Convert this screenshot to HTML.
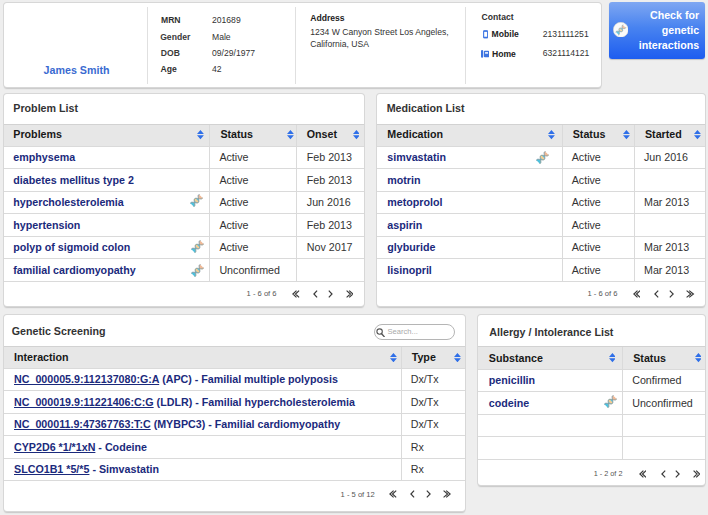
<!DOCTYPE html>
<html lang="en">
<head>
<meta charset="utf-8">
<title>Patient Summary</title>
<style>
*{box-sizing:border-box;margin:0;padding:0}
html,body{width:708px;height:515px;overflow:hidden}
body{background:#eeeeee;font-family:"Liberation Sans",sans-serif;font-size:10.7px;color:#333;position:relative}
.panel{position:absolute;background:#fff;border-radius:3px;box-shadow:0 0 0 1px #d7d7d7,0 1.9px 1.3px rgba(0,0,0,.17)}
.ptitle{position:absolute;font-weight:bold;font-size:10.7px;line-height:12px;color:#333;white-space:nowrap}
.t{position:absolute;white-space:nowrap;line-height:10px;font-size:8.6px;color:#333}
.b{font-weight:bold;color:#222}
table{position:absolute;border-collapse:collapse;table-layout:fixed}
th,td{height:22.55px;padding:0 0 0 10px;text-align:left;vertical-align:middle;font-size:10.7px;line-height:12px;white-space:nowrap;overflow:hidden;border-bottom:1px solid #dadada;border-left:1px solid #dadada;color:#333}
th:first-child,td:first-child{border-left:none;padding-left:9.3px}
th{background:#e7e7e7;font-weight:bold;color:#181818;border-top:1px solid #d2d2d2;padding-bottom:1.6px}
td{padding-left:9px;padding-bottom:.8px}
.p3 td:nth-child(3){padding-left:10px}
td.n{font-weight:bold;color:#1b2a7c}
.g td.n,.g th:first-child{padding-left:10px}
.g th{padding-bottom:0}
.g td{padding-bottom:.5px;height:22.5px}
.m td:first-child,.m th:first-child{padding-left:9.9px}
.a td:first-child,.a th:first-child{padding-left:10.5px}
.a th{padding-bottom:.4px}
.pager{position:absolute;color:#555;white-space:nowrap;line-height:10px}
</style>
</head>
<body>
<div class="panel" style="left:4px;top:3px;width:597.3px;height:84.2px"></div>
<div style="position:absolute;left:146.8px;top:6.5px;width:1px;height:77px;background:#e0e0e0"></div><div style="position:absolute;left:295.2px;top:6.5px;width:1px;height:77px;background:#e0e0e0"></div><div style="position:absolute;left:465.2px;top:6.5px;width:1px;height:77px;background:#e0e0e0"></div><div class="ptitle" style="left:43.6px;top:63.9px;color:#3a6bd1">James Smith</div>
<div class="t b" style="left:161px;top:14.90px;color:#303030">MRN</div><div class="t" style="left:212px;top:14.90px">201689</div><div class="t b" style="left:160.2px;top:31.90px;color:#3a3a3a">Gender</div><div class="t" style="left:212px;top:31.90px">Male</div><div class="t b" style="left:160.8px;top:47.70px;color:#3a3a3a">DOB</div><div class="t" style="left:212px;top:47.70px">09/29/1977</div><div class="t b" style="left:160.6px;top:64.10px;color:#303030">Age</div><div class="t" style="left:212px;top:64.10px">42</div>
<div class="t b" style="left:310.2px;top:12.7px">Address</div><div class="t" style="left:310.2px;top:26.8px">1234 W Canyon Street Los Angeles,</div><div class="t" style="left:310.2px;top:38.6px">California, USA</div>
<div class="t b" style="left:481.6px;top:12px;color:#303030">Contact</div><div class="t b" style="left:491.6px;top:28.6px">Mobile</div><div class="t b" style="left:492px;top:49px">Home</div><div class="t" style="left:542.8px;top:29.2px">2131111251</div><div class="t" style="left:542.8px;top:48.3px">6321114121</div><svg style="position:absolute;left:482.8px;top:30.4px" width="5.2" height="8.6" viewBox="0 0 5.2 8.6"><rect x=".6" y=".9" width="4" height="6.8" rx=".8" fill="none" stroke="#4a7fe6" stroke-width="1.2"/><path d="M.6 1.1H4.6M.6 7.5H4.6" stroke="#3d74e0" stroke-width="1.3"/></svg><svg style="position:absolute;left:481.3px;top:50.2px" width="8.2" height="7.8" viewBox="0 0 8.2 7.8"><rect x="0" y="0" width="2.2" height="7.8" rx="1.1" fill="#3d74e0"/><rect x="2.9" y=".7" width="5.3" height="6.6" rx="1" fill="#3d74e0"/><rect x="4.1" y="2" width="2.9" height="1.8" fill="#dfe9fb"/></svg>
<div style="position:absolute;left:609.2px;top:2px;width:96px;height:56.8px;border-radius:3px;background:linear-gradient(#7fa7f2,#4883f0 45%,#1d5df0);box-shadow:0 1px 1px rgba(0,0,0,.18)"><div style="position:absolute;right:6.1px;top:5.6px;text-align:right;color:#fff;font-weight:bold;font-size:10.65px;line-height:15px;white-space:nowrap">Check for<br>genetic<br>interactions</div><svg style="position:absolute;left:3.6px;top:19.7px" width="15.6" height="15.6" viewBox="-1.3 -1.3 15.6 15.6"><circle cx="6.5" cy="6.5" r="7.5" fill="#fbfbfa" stroke="#ddd6c8" stroke-width=".5"/><g transform="translate(6.5 6.5) scale(.8) translate(-6.5 -6.5)" opacity=".85"><path d="M0.38 9.25 L0.41 9.16 L0.45 9.08 L0.49 9.00 L0.54 8.92 L0.59 8.85 L0.64 8.79 L0.70 8.72 L0.76 8.67 L0.83 8.61 L0.90 8.56 L0.97 8.52 L1.05 8.48 L1.13 8.44 L1.22 8.40 L1.31 8.37 L1.40 8.35 L1.50 8.33 L1.60 8.31 L1.71 8.29 L1.82 8.28 L1.93 8.27 L2.05 8.27 L2.17 8.27 L2.29 8.27 L2.41 8.28 L2.54 8.28 L2.67 8.29 L2.80 8.31 L2.94 8.32 L3.08 8.34 L3.21 8.36 L3.35 8.38 L3.50 8.40 L3.64 8.42 L3.79 8.45 L3.93 8.47 L4.08 8.50 L4.22 8.53 L4.37 8.55 L4.52 8.58 L4.52 8.58 L4.55 8.73 L4.57 8.88 L4.60 9.02 L4.63 9.17 L4.65 9.31 L4.68 9.46 L4.70 9.60 L4.72 9.75 L4.74 9.89 L4.76 10.02 L4.78 10.16 L4.79 10.30 L4.81 10.43 L4.82 10.56 L4.82 10.69 L4.83 10.81 L4.83 10.93 L4.83 11.05 L4.83 11.17 L4.82 11.28 L4.81 11.39 L4.79 11.50 L4.77 11.60 L4.75 11.70 L4.73 11.79 L4.70 11.88 L4.66 11.97 L4.62 12.05 L4.58 12.13 L4.54 12.20 L4.49 12.27 L4.43 12.34 L4.38 12.40 L4.31 12.46 L4.25 12.51 L4.18 12.56 L4.10 12.61 L4.02 12.65 L3.94 12.69 L3.85 12.72Z" fill="#4fc0dc"/><path d="M4.52 8.58 L4.76 8.63 L5.01 8.67 L5.25 8.71 L5.48 8.75 L5.72 8.79 L5.95 8.82 L6.17 8.85 L6.39 8.87 L6.61 8.88 L6.81 8.89 L7.01 8.89 L7.20 8.88 L7.37 8.86 L7.54 8.83 L7.70 8.79 L7.85 8.74 L7.99 8.68 L8.12 8.61 L8.23 8.53 L8.34 8.44 L8.43 8.33 L8.51 8.22 L8.58 8.09 L8.64 7.95 L8.69 7.80 L8.73 7.64 L8.76 7.47 L8.78 7.30 L8.79 7.11 L8.79 6.91 L8.78 6.71 L8.77 6.49 L8.75 6.27 L8.72 6.05 L8.69 5.82 L8.65 5.58 L8.61 5.35 L8.57 5.11 L8.53 4.86 L8.48 4.62 L8.48 4.62 L8.24 4.57 L7.99 4.53 L7.75 4.49 L7.52 4.45 L7.28 4.41 L7.05 4.38 L6.83 4.35 L6.61 4.33 L6.39 4.32 L6.19 4.31 L5.99 4.31 L5.80 4.32 L5.63 4.34 L5.46 4.37 L5.30 4.41 L5.15 4.46 L5.01 4.52 L4.88 4.59 L4.77 4.67 L4.66 4.76 L4.57 4.87 L4.49 4.98 L4.42 5.11 L4.36 5.25 L4.31 5.40 L4.27 5.56 L4.24 5.73 L4.22 5.90 L4.21 6.09 L4.21 6.29 L4.22 6.49 L4.23 6.71 L4.25 6.93 L4.28 7.15 L4.31 7.38 L4.35 7.62 L4.39 7.85 L4.43 8.09 L4.47 8.34 L4.52 8.58Z" fill="#55c4e0"/><path d="M6.95 8.89 L7.03 8.89 L7.10 8.89 L7.18 8.88 L7.25 8.87 L7.32 8.87 L7.39 8.86 L7.45 8.85 L7.52 8.84 L7.58 8.82 L7.65 8.81 L7.71 8.79 L7.77 8.77 L7.83 8.75 L7.88 8.73 L7.94 8.71 L7.99 8.68 L8.04 8.66 L8.09 8.63 L8.14 8.60 L8.19 8.57 L8.23 8.53 L8.27 8.50 L8.31 8.46 L8.35 8.42 L8.39 8.38 L8.43 8.34 L8.46 8.30 L8.49 8.25 L8.52 8.20 L8.55 8.16 L8.58 8.10 L8.60 8.05 L8.63 8.00 L8.65 7.94 L8.67 7.88 L8.69 7.83 L8.70 7.76 L8.72 7.70 L8.73 7.64 L8.75 7.57 L5.53 4.35 L5.46 4.37 L5.40 4.38 L5.34 4.40 L5.27 4.41 L5.22 4.43 L5.16 4.45 L5.10 4.47 L5.05 4.50 L5.00 4.52 L4.94 4.55 L4.90 4.58 L4.85 4.61 L4.80 4.64 L4.76 4.67 L4.72 4.71 L4.68 4.75 L4.64 4.79 L4.60 4.83 L4.57 4.87 L4.53 4.91 L4.50 4.96 L4.47 5.01 L4.44 5.06 L4.42 5.11 L4.39 5.16 L4.37 5.22 L4.35 5.27 L4.33 5.33 L4.31 5.39 L4.29 5.45 L4.28 5.52 L4.26 5.58 L4.25 5.65 L4.24 5.71 L4.23 5.78 L4.23 5.85 L4.22 5.92 L4.21 6.00 L4.21 6.07 L4.21 6.15Z" fill="#f6cd94"/><path d="M8.48 4.62 L8.45 4.47 L8.43 4.32 L8.40 4.18 L8.37 4.03 L8.35 3.89 L8.32 3.74 L8.30 3.60 L8.28 3.45 L8.26 3.31 L8.24 3.18 L8.22 3.04 L8.21 2.90 L8.19 2.77 L8.18 2.64 L8.18 2.51 L8.17 2.39 L8.17 2.27 L8.17 2.15 L8.17 2.03 L8.18 1.92 L8.19 1.81 L8.21 1.70 L8.23 1.60 L8.25 1.50 L8.27 1.41 L8.30 1.32 L8.34 1.23 L8.38 1.15 L8.42 1.07 L8.46 1.00 L8.51 0.93 L8.57 0.86 L8.62 0.80 L8.69 0.74 L8.75 0.69 L8.82 0.64 L8.90 0.59 L8.98 0.55 L9.06 0.51 L9.15 0.48 L12.62 3.95 L12.59 4.04 L12.55 4.12 L12.51 4.20 L12.46 4.28 L12.41 4.35 L12.36 4.41 L12.30 4.48 L12.24 4.53 L12.17 4.59 L12.10 4.64 L12.03 4.68 L11.95 4.72 L11.87 4.76 L11.78 4.80 L11.69 4.83 L11.60 4.85 L11.50 4.87 L11.40 4.89 L11.29 4.91 L11.18 4.92 L11.07 4.93 L10.95 4.93 L10.83 4.93 L10.71 4.93 L10.59 4.92 L10.46 4.92 L10.33 4.91 L10.20 4.89 L10.06 4.88 L9.92 4.86 L9.79 4.84 L9.65 4.82 L9.50 4.80 L9.36 4.78 L9.21 4.75 L9.07 4.73 L8.92 4.70 L8.78 4.67 L8.63 4.65 L8.48 4.62Z" fill="#efba98"/><path d="M0.38 9.25 L0.52 8.95 L0.72 8.71 L0.97 8.52 L1.27 8.39 L1.63 8.30 L2.03 8.27 L2.48 8.28 L2.96 8.32 L3.47 8.39 L4.00 8.48 L4.54 8.58 L5.07 8.68 L5.60 8.77 L6.11 8.84 L6.59 8.88 L7.03 8.89 L7.44 8.85 L7.79 8.77 L8.09 8.63 L8.34 8.44 L8.53 8.19 L8.67 7.89 L8.75 7.54 L8.79 7.13 L8.78 6.69 L8.74 6.21 L8.67 5.70 L8.58 5.17 L8.48 4.64 L8.38 4.10 L8.29 3.57 L8.22 3.06 L8.18 2.58 L8.17 2.13 L8.20 1.73 L8.29 1.37 L8.42 1.07 L8.61 0.82 L8.85 0.62 L9.15 0.48" fill="none" stroke="#7f97a0" stroke-width="1" stroke-linecap="round"/><path d="M3.85 12.72 L4.15 12.58 L4.39 12.38 L4.58 12.13 L4.71 11.83 L4.80 11.47 L4.83 11.07 L4.82 10.62 L4.78 10.14 L4.71 9.63 L4.62 9.10 L4.52 8.56 L4.42 8.03 L4.33 7.50 L4.26 6.99 L4.22 6.51 L4.21 6.07 L4.25 5.66 L4.33 5.31 L4.47 5.01 L4.66 4.76 L4.91 4.57 L5.21 4.43 L5.56 4.35 L5.97 4.31 L6.41 4.32 L6.89 4.36 L7.40 4.43 L7.93 4.52 L8.46 4.62 L9.00 4.72 L9.53 4.81 L10.04 4.88 L10.52 4.92 L10.97 4.93 L11.37 4.90 L11.73 4.81 L12.03 4.68 L12.28 4.49 L12.48 4.25 L12.62 3.95" fill="none" stroke="#8c9a96" stroke-width="1" stroke-linecap="round"/></g></svg></div>
<div class="panel" style="left:4px;top:94px;width:360.3px;height:211.8px"></div><div class="ptitle" style="left:13.3px;top:101.5px">Problem List</div><div class="p3"><table style="left:4px;top:123.5px;width:360.3px"><colgroup><col style="width:205.9px"><col style="width:86.4px"><col></colgroup><tr><th style="height:22.2px">Problems</th><th style="height:22.2px">Status</th><th style="height:22.2px">Onset</th></tr><tr><td class="n">emphysema</td><td>Active</td><td>Feb 2013</td></tr><tr><td class="n">diabetes mellitus type 2</td><td>Active</td><td>Feb 2013</td></tr><tr><td class="n">hypercholesterolemia</td><td>Active</td><td>Jun 2016</td></tr><tr><td class="n">hypertension</td><td>Active</td><td>Feb 2013</td></tr><tr><td class="n">polyp of sigmoid colon</td><td>Active</td><td>Nov 2017</td></tr><tr><td class="n">familial cardiomyopathy</td><td>Unconfirmed</td><td></td></tr></table></div><svg style="position:absolute;left:197.05px;top:130.20px" width="6.9" height="9.4" viewBox="0 0 6.5 8.7"><path d="M3.25 0L6.5 3.8H0Z M0 4.9H6.5L3.25 8.7Z" fill="#2f6fe8"/></svg><svg style="position:absolute;left:286.65px;top:130.20px" width="6.9" height="9.4" viewBox="0 0 6.5 8.7"><path d="M3.25 0L6.5 3.8H0Z M0 4.9H6.5L3.25 8.7Z" fill="#2f6fe8"/></svg><svg style="position:absolute;left:352.55px;top:130.20px" width="6.9" height="9.4" viewBox="0 0 6.5 8.7"><path d="M3.25 0L6.5 3.8H0Z M0 4.9H6.5L3.25 8.7Z" fill="#2f6fe8"/></svg><svg style="position:absolute;left:190.2px;top:194.4px" width="13" height="13" viewBox="0 0 13 13"><path d="M0.38 9.25 L0.41 9.16 L0.45 9.08 L0.49 9.00 L0.54 8.92 L0.59 8.85 L0.64 8.79 L0.70 8.72 L0.76 8.67 L0.83 8.61 L0.90 8.56 L0.97 8.52 L1.05 8.48 L1.13 8.44 L1.22 8.40 L1.31 8.37 L1.40 8.35 L1.50 8.33 L1.60 8.31 L1.71 8.29 L1.82 8.28 L1.93 8.27 L2.05 8.27 L2.17 8.27 L2.29 8.27 L2.41 8.28 L2.54 8.28 L2.67 8.29 L2.80 8.31 L2.94 8.32 L3.08 8.34 L3.21 8.36 L3.35 8.38 L3.50 8.40 L3.64 8.42 L3.79 8.45 L3.93 8.47 L4.08 8.50 L4.22 8.53 L4.37 8.55 L4.52 8.58 L4.52 8.58 L4.55 8.73 L4.57 8.88 L4.60 9.02 L4.63 9.17 L4.65 9.31 L4.68 9.46 L4.70 9.60 L4.72 9.75 L4.74 9.89 L4.76 10.02 L4.78 10.16 L4.79 10.30 L4.81 10.43 L4.82 10.56 L4.82 10.69 L4.83 10.81 L4.83 10.93 L4.83 11.05 L4.83 11.17 L4.82 11.28 L4.81 11.39 L4.79 11.50 L4.77 11.60 L4.75 11.70 L4.73 11.79 L4.70 11.88 L4.66 11.97 L4.62 12.05 L4.58 12.13 L4.54 12.20 L4.49 12.27 L4.43 12.34 L4.38 12.40 L4.31 12.46 L4.25 12.51 L4.18 12.56 L4.10 12.61 L4.02 12.65 L3.94 12.69 L3.85 12.72Z" fill="#4fc0dc"/><path d="M4.52 8.58 L4.76 8.63 L5.01 8.67 L5.25 8.71 L5.48 8.75 L5.72 8.79 L5.95 8.82 L6.17 8.85 L6.39 8.87 L6.61 8.88 L6.81 8.89 L7.01 8.89 L7.20 8.88 L7.37 8.86 L7.54 8.83 L7.70 8.79 L7.85 8.74 L7.99 8.68 L8.12 8.61 L8.23 8.53 L8.34 8.44 L8.43 8.33 L8.51 8.22 L8.58 8.09 L8.64 7.95 L8.69 7.80 L8.73 7.64 L8.76 7.47 L8.78 7.30 L8.79 7.11 L8.79 6.91 L8.78 6.71 L8.77 6.49 L8.75 6.27 L8.72 6.05 L8.69 5.82 L8.65 5.58 L8.61 5.35 L8.57 5.11 L8.53 4.86 L8.48 4.62 L8.48 4.62 L8.24 4.57 L7.99 4.53 L7.75 4.49 L7.52 4.45 L7.28 4.41 L7.05 4.38 L6.83 4.35 L6.61 4.33 L6.39 4.32 L6.19 4.31 L5.99 4.31 L5.80 4.32 L5.63 4.34 L5.46 4.37 L5.30 4.41 L5.15 4.46 L5.01 4.52 L4.88 4.59 L4.77 4.67 L4.66 4.76 L4.57 4.87 L4.49 4.98 L4.42 5.11 L4.36 5.25 L4.31 5.40 L4.27 5.56 L4.24 5.73 L4.22 5.90 L4.21 6.09 L4.21 6.29 L4.22 6.49 L4.23 6.71 L4.25 6.93 L4.28 7.15 L4.31 7.38 L4.35 7.62 L4.39 7.85 L4.43 8.09 L4.47 8.34 L4.52 8.58Z" fill="#55c4e0"/><path d="M6.95 8.89 L7.03 8.89 L7.10 8.89 L7.18 8.88 L7.25 8.87 L7.32 8.87 L7.39 8.86 L7.45 8.85 L7.52 8.84 L7.58 8.82 L7.65 8.81 L7.71 8.79 L7.77 8.77 L7.83 8.75 L7.88 8.73 L7.94 8.71 L7.99 8.68 L8.04 8.66 L8.09 8.63 L8.14 8.60 L8.19 8.57 L8.23 8.53 L8.27 8.50 L8.31 8.46 L8.35 8.42 L8.39 8.38 L8.43 8.34 L8.46 8.30 L8.49 8.25 L8.52 8.20 L8.55 8.16 L8.58 8.10 L8.60 8.05 L8.63 8.00 L8.65 7.94 L8.67 7.88 L8.69 7.83 L8.70 7.76 L8.72 7.70 L8.73 7.64 L8.75 7.57 L5.53 4.35 L5.46 4.37 L5.40 4.38 L5.34 4.40 L5.27 4.41 L5.22 4.43 L5.16 4.45 L5.10 4.47 L5.05 4.50 L5.00 4.52 L4.94 4.55 L4.90 4.58 L4.85 4.61 L4.80 4.64 L4.76 4.67 L4.72 4.71 L4.68 4.75 L4.64 4.79 L4.60 4.83 L4.57 4.87 L4.53 4.91 L4.50 4.96 L4.47 5.01 L4.44 5.06 L4.42 5.11 L4.39 5.16 L4.37 5.22 L4.35 5.27 L4.33 5.33 L4.31 5.39 L4.29 5.45 L4.28 5.52 L4.26 5.58 L4.25 5.65 L4.24 5.71 L4.23 5.78 L4.23 5.85 L4.22 5.92 L4.21 6.00 L4.21 6.07 L4.21 6.15Z" fill="#f6cd94"/><path d="M8.48 4.62 L8.45 4.47 L8.43 4.32 L8.40 4.18 L8.37 4.03 L8.35 3.89 L8.32 3.74 L8.30 3.60 L8.28 3.45 L8.26 3.31 L8.24 3.18 L8.22 3.04 L8.21 2.90 L8.19 2.77 L8.18 2.64 L8.18 2.51 L8.17 2.39 L8.17 2.27 L8.17 2.15 L8.17 2.03 L8.18 1.92 L8.19 1.81 L8.21 1.70 L8.23 1.60 L8.25 1.50 L8.27 1.41 L8.30 1.32 L8.34 1.23 L8.38 1.15 L8.42 1.07 L8.46 1.00 L8.51 0.93 L8.57 0.86 L8.62 0.80 L8.69 0.74 L8.75 0.69 L8.82 0.64 L8.90 0.59 L8.98 0.55 L9.06 0.51 L9.15 0.48 L12.62 3.95 L12.59 4.04 L12.55 4.12 L12.51 4.20 L12.46 4.28 L12.41 4.35 L12.36 4.41 L12.30 4.48 L12.24 4.53 L12.17 4.59 L12.10 4.64 L12.03 4.68 L11.95 4.72 L11.87 4.76 L11.78 4.80 L11.69 4.83 L11.60 4.85 L11.50 4.87 L11.40 4.89 L11.29 4.91 L11.18 4.92 L11.07 4.93 L10.95 4.93 L10.83 4.93 L10.71 4.93 L10.59 4.92 L10.46 4.92 L10.33 4.91 L10.20 4.89 L10.06 4.88 L9.92 4.86 L9.79 4.84 L9.65 4.82 L9.50 4.80 L9.36 4.78 L9.21 4.75 L9.07 4.73 L8.92 4.70 L8.78 4.67 L8.63 4.65 L8.48 4.62Z" fill="#efba98"/><path d="M0.38 9.25 L0.52 8.95 L0.72 8.71 L0.97 8.52 L1.27 8.39 L1.63 8.30 L2.03 8.27 L2.48 8.28 L2.96 8.32 L3.47 8.39 L4.00 8.48 L4.54 8.58 L5.07 8.68 L5.60 8.77 L6.11 8.84 L6.59 8.88 L7.03 8.89 L7.44 8.85 L7.79 8.77 L8.09 8.63 L8.34 8.44 L8.53 8.19 L8.67 7.89 L8.75 7.54 L8.79 7.13 L8.78 6.69 L8.74 6.21 L8.67 5.70 L8.58 5.17 L8.48 4.64 L8.38 4.10 L8.29 3.57 L8.22 3.06 L8.18 2.58 L8.17 2.13 L8.20 1.73 L8.29 1.37 L8.42 1.07 L8.61 0.82 L8.85 0.62 L9.15 0.48" fill="none" stroke="#7f97a0" stroke-width="1" stroke-linecap="round"/><path d="M3.85 12.72 L4.15 12.58 L4.39 12.38 L4.58 12.13 L4.71 11.83 L4.80 11.47 L4.83 11.07 L4.82 10.62 L4.78 10.14 L4.71 9.63 L4.62 9.10 L4.52 8.56 L4.42 8.03 L4.33 7.50 L4.26 6.99 L4.22 6.51 L4.21 6.07 L4.25 5.66 L4.33 5.31 L4.47 5.01 L4.66 4.76 L4.91 4.57 L5.21 4.43 L5.56 4.35 L5.97 4.31 L6.41 4.32 L6.89 4.36 L7.40 4.43 L7.93 4.52 L8.46 4.62 L9.00 4.72 L9.53 4.81 L10.04 4.88 L10.52 4.92 L10.97 4.93 L11.37 4.90 L11.73 4.81 L12.03 4.68 L12.28 4.49 L12.48 4.25 L12.62 3.95" fill="none" stroke="#8c9a96" stroke-width="1" stroke-linecap="round"/></svg><svg style="position:absolute;left:191.1px;top:240.3px" width="13" height="13" viewBox="0 0 13 13"><path d="M0.38 9.25 L0.41 9.16 L0.45 9.08 L0.49 9.00 L0.54 8.92 L0.59 8.85 L0.64 8.79 L0.70 8.72 L0.76 8.67 L0.83 8.61 L0.90 8.56 L0.97 8.52 L1.05 8.48 L1.13 8.44 L1.22 8.40 L1.31 8.37 L1.40 8.35 L1.50 8.33 L1.60 8.31 L1.71 8.29 L1.82 8.28 L1.93 8.27 L2.05 8.27 L2.17 8.27 L2.29 8.27 L2.41 8.28 L2.54 8.28 L2.67 8.29 L2.80 8.31 L2.94 8.32 L3.08 8.34 L3.21 8.36 L3.35 8.38 L3.50 8.40 L3.64 8.42 L3.79 8.45 L3.93 8.47 L4.08 8.50 L4.22 8.53 L4.37 8.55 L4.52 8.58 L4.52 8.58 L4.55 8.73 L4.57 8.88 L4.60 9.02 L4.63 9.17 L4.65 9.31 L4.68 9.46 L4.70 9.60 L4.72 9.75 L4.74 9.89 L4.76 10.02 L4.78 10.16 L4.79 10.30 L4.81 10.43 L4.82 10.56 L4.82 10.69 L4.83 10.81 L4.83 10.93 L4.83 11.05 L4.83 11.17 L4.82 11.28 L4.81 11.39 L4.79 11.50 L4.77 11.60 L4.75 11.70 L4.73 11.79 L4.70 11.88 L4.66 11.97 L4.62 12.05 L4.58 12.13 L4.54 12.20 L4.49 12.27 L4.43 12.34 L4.38 12.40 L4.31 12.46 L4.25 12.51 L4.18 12.56 L4.10 12.61 L4.02 12.65 L3.94 12.69 L3.85 12.72Z" fill="#4fc0dc"/><path d="M4.52 8.58 L4.76 8.63 L5.01 8.67 L5.25 8.71 L5.48 8.75 L5.72 8.79 L5.95 8.82 L6.17 8.85 L6.39 8.87 L6.61 8.88 L6.81 8.89 L7.01 8.89 L7.20 8.88 L7.37 8.86 L7.54 8.83 L7.70 8.79 L7.85 8.74 L7.99 8.68 L8.12 8.61 L8.23 8.53 L8.34 8.44 L8.43 8.33 L8.51 8.22 L8.58 8.09 L8.64 7.95 L8.69 7.80 L8.73 7.64 L8.76 7.47 L8.78 7.30 L8.79 7.11 L8.79 6.91 L8.78 6.71 L8.77 6.49 L8.75 6.27 L8.72 6.05 L8.69 5.82 L8.65 5.58 L8.61 5.35 L8.57 5.11 L8.53 4.86 L8.48 4.62 L8.48 4.62 L8.24 4.57 L7.99 4.53 L7.75 4.49 L7.52 4.45 L7.28 4.41 L7.05 4.38 L6.83 4.35 L6.61 4.33 L6.39 4.32 L6.19 4.31 L5.99 4.31 L5.80 4.32 L5.63 4.34 L5.46 4.37 L5.30 4.41 L5.15 4.46 L5.01 4.52 L4.88 4.59 L4.77 4.67 L4.66 4.76 L4.57 4.87 L4.49 4.98 L4.42 5.11 L4.36 5.25 L4.31 5.40 L4.27 5.56 L4.24 5.73 L4.22 5.90 L4.21 6.09 L4.21 6.29 L4.22 6.49 L4.23 6.71 L4.25 6.93 L4.28 7.15 L4.31 7.38 L4.35 7.62 L4.39 7.85 L4.43 8.09 L4.47 8.34 L4.52 8.58Z" fill="#55c4e0"/><path d="M6.95 8.89 L7.03 8.89 L7.10 8.89 L7.18 8.88 L7.25 8.87 L7.32 8.87 L7.39 8.86 L7.45 8.85 L7.52 8.84 L7.58 8.82 L7.65 8.81 L7.71 8.79 L7.77 8.77 L7.83 8.75 L7.88 8.73 L7.94 8.71 L7.99 8.68 L8.04 8.66 L8.09 8.63 L8.14 8.60 L8.19 8.57 L8.23 8.53 L8.27 8.50 L8.31 8.46 L8.35 8.42 L8.39 8.38 L8.43 8.34 L8.46 8.30 L8.49 8.25 L8.52 8.20 L8.55 8.16 L8.58 8.10 L8.60 8.05 L8.63 8.00 L8.65 7.94 L8.67 7.88 L8.69 7.83 L8.70 7.76 L8.72 7.70 L8.73 7.64 L8.75 7.57 L5.53 4.35 L5.46 4.37 L5.40 4.38 L5.34 4.40 L5.27 4.41 L5.22 4.43 L5.16 4.45 L5.10 4.47 L5.05 4.50 L5.00 4.52 L4.94 4.55 L4.90 4.58 L4.85 4.61 L4.80 4.64 L4.76 4.67 L4.72 4.71 L4.68 4.75 L4.64 4.79 L4.60 4.83 L4.57 4.87 L4.53 4.91 L4.50 4.96 L4.47 5.01 L4.44 5.06 L4.42 5.11 L4.39 5.16 L4.37 5.22 L4.35 5.27 L4.33 5.33 L4.31 5.39 L4.29 5.45 L4.28 5.52 L4.26 5.58 L4.25 5.65 L4.24 5.71 L4.23 5.78 L4.23 5.85 L4.22 5.92 L4.21 6.00 L4.21 6.07 L4.21 6.15Z" fill="#f6cd94"/><path d="M8.48 4.62 L8.45 4.47 L8.43 4.32 L8.40 4.18 L8.37 4.03 L8.35 3.89 L8.32 3.74 L8.30 3.60 L8.28 3.45 L8.26 3.31 L8.24 3.18 L8.22 3.04 L8.21 2.90 L8.19 2.77 L8.18 2.64 L8.18 2.51 L8.17 2.39 L8.17 2.27 L8.17 2.15 L8.17 2.03 L8.18 1.92 L8.19 1.81 L8.21 1.70 L8.23 1.60 L8.25 1.50 L8.27 1.41 L8.30 1.32 L8.34 1.23 L8.38 1.15 L8.42 1.07 L8.46 1.00 L8.51 0.93 L8.57 0.86 L8.62 0.80 L8.69 0.74 L8.75 0.69 L8.82 0.64 L8.90 0.59 L8.98 0.55 L9.06 0.51 L9.15 0.48 L12.62 3.95 L12.59 4.04 L12.55 4.12 L12.51 4.20 L12.46 4.28 L12.41 4.35 L12.36 4.41 L12.30 4.48 L12.24 4.53 L12.17 4.59 L12.10 4.64 L12.03 4.68 L11.95 4.72 L11.87 4.76 L11.78 4.80 L11.69 4.83 L11.60 4.85 L11.50 4.87 L11.40 4.89 L11.29 4.91 L11.18 4.92 L11.07 4.93 L10.95 4.93 L10.83 4.93 L10.71 4.93 L10.59 4.92 L10.46 4.92 L10.33 4.91 L10.20 4.89 L10.06 4.88 L9.92 4.86 L9.79 4.84 L9.65 4.82 L9.50 4.80 L9.36 4.78 L9.21 4.75 L9.07 4.73 L8.92 4.70 L8.78 4.67 L8.63 4.65 L8.48 4.62Z" fill="#efba98"/><path d="M0.38 9.25 L0.52 8.95 L0.72 8.71 L0.97 8.52 L1.27 8.39 L1.63 8.30 L2.03 8.27 L2.48 8.28 L2.96 8.32 L3.47 8.39 L4.00 8.48 L4.54 8.58 L5.07 8.68 L5.60 8.77 L6.11 8.84 L6.59 8.88 L7.03 8.89 L7.44 8.85 L7.79 8.77 L8.09 8.63 L8.34 8.44 L8.53 8.19 L8.67 7.89 L8.75 7.54 L8.79 7.13 L8.78 6.69 L8.74 6.21 L8.67 5.70 L8.58 5.17 L8.48 4.64 L8.38 4.10 L8.29 3.57 L8.22 3.06 L8.18 2.58 L8.17 2.13 L8.20 1.73 L8.29 1.37 L8.42 1.07 L8.61 0.82 L8.85 0.62 L9.15 0.48" fill="none" stroke="#7f97a0" stroke-width="1" stroke-linecap="round"/><path d="M3.85 12.72 L4.15 12.58 L4.39 12.38 L4.58 12.13 L4.71 11.83 L4.80 11.47 L4.83 11.07 L4.82 10.62 L4.78 10.14 L4.71 9.63 L4.62 9.10 L4.52 8.56 L4.42 8.03 L4.33 7.50 L4.26 6.99 L4.22 6.51 L4.21 6.07 L4.25 5.66 L4.33 5.31 L4.47 5.01 L4.66 4.76 L4.91 4.57 L5.21 4.43 L5.56 4.35 L5.97 4.31 L6.41 4.32 L6.89 4.36 L7.40 4.43 L7.93 4.52 L8.46 4.62 L9.00 4.72 L9.53 4.81 L10.04 4.88 L10.52 4.92 L10.97 4.93 L11.37 4.90 L11.73 4.81 L12.03 4.68 L12.28 4.49 L12.48 4.25 L12.62 3.95" fill="none" stroke="#8c9a96" stroke-width="1" stroke-linecap="round"/></svg><svg style="position:absolute;left:191.1px;top:264.1px" width="13" height="13" viewBox="0 0 13 13"><path d="M0.38 9.25 L0.41 9.16 L0.45 9.08 L0.49 9.00 L0.54 8.92 L0.59 8.85 L0.64 8.79 L0.70 8.72 L0.76 8.67 L0.83 8.61 L0.90 8.56 L0.97 8.52 L1.05 8.48 L1.13 8.44 L1.22 8.40 L1.31 8.37 L1.40 8.35 L1.50 8.33 L1.60 8.31 L1.71 8.29 L1.82 8.28 L1.93 8.27 L2.05 8.27 L2.17 8.27 L2.29 8.27 L2.41 8.28 L2.54 8.28 L2.67 8.29 L2.80 8.31 L2.94 8.32 L3.08 8.34 L3.21 8.36 L3.35 8.38 L3.50 8.40 L3.64 8.42 L3.79 8.45 L3.93 8.47 L4.08 8.50 L4.22 8.53 L4.37 8.55 L4.52 8.58 L4.52 8.58 L4.55 8.73 L4.57 8.88 L4.60 9.02 L4.63 9.17 L4.65 9.31 L4.68 9.46 L4.70 9.60 L4.72 9.75 L4.74 9.89 L4.76 10.02 L4.78 10.16 L4.79 10.30 L4.81 10.43 L4.82 10.56 L4.82 10.69 L4.83 10.81 L4.83 10.93 L4.83 11.05 L4.83 11.17 L4.82 11.28 L4.81 11.39 L4.79 11.50 L4.77 11.60 L4.75 11.70 L4.73 11.79 L4.70 11.88 L4.66 11.97 L4.62 12.05 L4.58 12.13 L4.54 12.20 L4.49 12.27 L4.43 12.34 L4.38 12.40 L4.31 12.46 L4.25 12.51 L4.18 12.56 L4.10 12.61 L4.02 12.65 L3.94 12.69 L3.85 12.72Z" fill="#4fc0dc"/><path d="M4.52 8.58 L4.76 8.63 L5.01 8.67 L5.25 8.71 L5.48 8.75 L5.72 8.79 L5.95 8.82 L6.17 8.85 L6.39 8.87 L6.61 8.88 L6.81 8.89 L7.01 8.89 L7.20 8.88 L7.37 8.86 L7.54 8.83 L7.70 8.79 L7.85 8.74 L7.99 8.68 L8.12 8.61 L8.23 8.53 L8.34 8.44 L8.43 8.33 L8.51 8.22 L8.58 8.09 L8.64 7.95 L8.69 7.80 L8.73 7.64 L8.76 7.47 L8.78 7.30 L8.79 7.11 L8.79 6.91 L8.78 6.71 L8.77 6.49 L8.75 6.27 L8.72 6.05 L8.69 5.82 L8.65 5.58 L8.61 5.35 L8.57 5.11 L8.53 4.86 L8.48 4.62 L8.48 4.62 L8.24 4.57 L7.99 4.53 L7.75 4.49 L7.52 4.45 L7.28 4.41 L7.05 4.38 L6.83 4.35 L6.61 4.33 L6.39 4.32 L6.19 4.31 L5.99 4.31 L5.80 4.32 L5.63 4.34 L5.46 4.37 L5.30 4.41 L5.15 4.46 L5.01 4.52 L4.88 4.59 L4.77 4.67 L4.66 4.76 L4.57 4.87 L4.49 4.98 L4.42 5.11 L4.36 5.25 L4.31 5.40 L4.27 5.56 L4.24 5.73 L4.22 5.90 L4.21 6.09 L4.21 6.29 L4.22 6.49 L4.23 6.71 L4.25 6.93 L4.28 7.15 L4.31 7.38 L4.35 7.62 L4.39 7.85 L4.43 8.09 L4.47 8.34 L4.52 8.58Z" fill="#55c4e0"/><path d="M6.95 8.89 L7.03 8.89 L7.10 8.89 L7.18 8.88 L7.25 8.87 L7.32 8.87 L7.39 8.86 L7.45 8.85 L7.52 8.84 L7.58 8.82 L7.65 8.81 L7.71 8.79 L7.77 8.77 L7.83 8.75 L7.88 8.73 L7.94 8.71 L7.99 8.68 L8.04 8.66 L8.09 8.63 L8.14 8.60 L8.19 8.57 L8.23 8.53 L8.27 8.50 L8.31 8.46 L8.35 8.42 L8.39 8.38 L8.43 8.34 L8.46 8.30 L8.49 8.25 L8.52 8.20 L8.55 8.16 L8.58 8.10 L8.60 8.05 L8.63 8.00 L8.65 7.94 L8.67 7.88 L8.69 7.83 L8.70 7.76 L8.72 7.70 L8.73 7.64 L8.75 7.57 L5.53 4.35 L5.46 4.37 L5.40 4.38 L5.34 4.40 L5.27 4.41 L5.22 4.43 L5.16 4.45 L5.10 4.47 L5.05 4.50 L5.00 4.52 L4.94 4.55 L4.90 4.58 L4.85 4.61 L4.80 4.64 L4.76 4.67 L4.72 4.71 L4.68 4.75 L4.64 4.79 L4.60 4.83 L4.57 4.87 L4.53 4.91 L4.50 4.96 L4.47 5.01 L4.44 5.06 L4.42 5.11 L4.39 5.16 L4.37 5.22 L4.35 5.27 L4.33 5.33 L4.31 5.39 L4.29 5.45 L4.28 5.52 L4.26 5.58 L4.25 5.65 L4.24 5.71 L4.23 5.78 L4.23 5.85 L4.22 5.92 L4.21 6.00 L4.21 6.07 L4.21 6.15Z" fill="#f6cd94"/><path d="M8.48 4.62 L8.45 4.47 L8.43 4.32 L8.40 4.18 L8.37 4.03 L8.35 3.89 L8.32 3.74 L8.30 3.60 L8.28 3.45 L8.26 3.31 L8.24 3.18 L8.22 3.04 L8.21 2.90 L8.19 2.77 L8.18 2.64 L8.18 2.51 L8.17 2.39 L8.17 2.27 L8.17 2.15 L8.17 2.03 L8.18 1.92 L8.19 1.81 L8.21 1.70 L8.23 1.60 L8.25 1.50 L8.27 1.41 L8.30 1.32 L8.34 1.23 L8.38 1.15 L8.42 1.07 L8.46 1.00 L8.51 0.93 L8.57 0.86 L8.62 0.80 L8.69 0.74 L8.75 0.69 L8.82 0.64 L8.90 0.59 L8.98 0.55 L9.06 0.51 L9.15 0.48 L12.62 3.95 L12.59 4.04 L12.55 4.12 L12.51 4.20 L12.46 4.28 L12.41 4.35 L12.36 4.41 L12.30 4.48 L12.24 4.53 L12.17 4.59 L12.10 4.64 L12.03 4.68 L11.95 4.72 L11.87 4.76 L11.78 4.80 L11.69 4.83 L11.60 4.85 L11.50 4.87 L11.40 4.89 L11.29 4.91 L11.18 4.92 L11.07 4.93 L10.95 4.93 L10.83 4.93 L10.71 4.93 L10.59 4.92 L10.46 4.92 L10.33 4.91 L10.20 4.89 L10.06 4.88 L9.92 4.86 L9.79 4.84 L9.65 4.82 L9.50 4.80 L9.36 4.78 L9.21 4.75 L9.07 4.73 L8.92 4.70 L8.78 4.67 L8.63 4.65 L8.48 4.62Z" fill="#efba98"/><path d="M0.38 9.25 L0.52 8.95 L0.72 8.71 L0.97 8.52 L1.27 8.39 L1.63 8.30 L2.03 8.27 L2.48 8.28 L2.96 8.32 L3.47 8.39 L4.00 8.48 L4.54 8.58 L5.07 8.68 L5.60 8.77 L6.11 8.84 L6.59 8.88 L7.03 8.89 L7.44 8.85 L7.79 8.77 L8.09 8.63 L8.34 8.44 L8.53 8.19 L8.67 7.89 L8.75 7.54 L8.79 7.13 L8.78 6.69 L8.74 6.21 L8.67 5.70 L8.58 5.17 L8.48 4.64 L8.38 4.10 L8.29 3.57 L8.22 3.06 L8.18 2.58 L8.17 2.13 L8.20 1.73 L8.29 1.37 L8.42 1.07 L8.61 0.82 L8.85 0.62 L9.15 0.48" fill="none" stroke="#7f97a0" stroke-width="1" stroke-linecap="round"/><path d="M3.85 12.72 L4.15 12.58 L4.39 12.38 L4.58 12.13 L4.71 11.83 L4.80 11.47 L4.83 11.07 L4.82 10.62 L4.78 10.14 L4.71 9.63 L4.62 9.10 L4.52 8.56 L4.42 8.03 L4.33 7.50 L4.26 6.99 L4.22 6.51 L4.21 6.07 L4.25 5.66 L4.33 5.31 L4.47 5.01 L4.66 4.76 L4.91 4.57 L5.21 4.43 L5.56 4.35 L5.97 4.31 L6.41 4.32 L6.89 4.36 L7.40 4.43 L7.93 4.52 L8.46 4.62 L9.00 4.72 L9.53 4.81 L10.04 4.88 L10.52 4.92 L10.97 4.93 L11.37 4.90 L11.73 4.81 L12.03 4.68 L12.28 4.49 L12.48 4.25 L12.62 3.95" fill="none" stroke="#8c9a96" stroke-width="1" stroke-linecap="round"/></svg><div class="pager" style="left:246.60px;top:288.80px;font-size:7.6px">1 - 6 of 6</div><svg style="position:absolute;left:292.00px;top:289.60px" width="7.70" height="8" viewBox="0 0 7.70 8"><path d="M4.50 .6L.9 4L4.50 7.4 M7.10 .6L3.50 4L7.10 7.4" fill="none" stroke="#3a3a3a" stroke-width="1.2"/></svg><svg style="position:absolute;left:312.80px;top:289.60px" width="4.90" height="8" viewBox="0 0 4.90 8"><path d="M4.10 .6L.9 4L4.10 7.4" fill="none" stroke="#3a3a3a" stroke-width="1.2"/></svg><svg style="position:absolute;left:328.40px;top:289.60px" width="4.90" height="8" viewBox="0 0 4.90 8"><path d="M.8 .6L4.00 4L.8 7.4" fill="none" stroke="#3a3a3a" stroke-width="1.2"/></svg><svg style="position:absolute;left:345.60px;top:289.60px" width="7.90" height="8" viewBox="0 0 7.90 8"><path d="M.6 .6L4.40 4L.6 7.4 M3.20 .6L7.00 4L3.20 7.4" fill="none" stroke="#3a3a3a" stroke-width="1.2"/></svg>
<div class="panel" style="left:377.4px;top:94px;width:327.5px;height:211.8px"></div><div class="ptitle" style="left:386.7px;top:101.5px">Medication List</div><div class="m"><table style="left:377.4px;top:123.5px;width:327.5px"><colgroup><col style="width:184.8px"><col style="width:72.3px"><col></colgroup><tr><th style="height:22.2px">Medication</th><th style="height:22.2px">Status</th><th style="height:22.2px">Started</th></tr><tr><td class="n">simvastatin</td><td>Active</td><td>Jun 2016</td></tr><tr><td class="n">motrin</td><td>Active</td><td></td></tr><tr><td class="n">metoprolol</td><td>Active</td><td>Mar 2013</td></tr><tr><td class="n">aspirin</td><td>Active</td><td></td></tr><tr><td class="n">glyburide</td><td>Active</td><td>Mar 2013</td></tr><tr><td class="n">lisinopril</td><td>Active</td><td>Mar 2013</td></tr></table></div><svg style="position:absolute;left:547.85px;top:130.20px" width="6.9" height="9.4" viewBox="0 0 6.5 8.7"><path d="M3.25 0L6.5 3.8H0Z M0 4.9H6.5L3.25 8.7Z" fill="#2f6fe8"/></svg><svg style="position:absolute;left:622.85px;top:130.20px" width="6.9" height="9.4" viewBox="0 0 6.5 8.7"><path d="M3.25 0L6.5 3.8H0Z M0 4.9H6.5L3.25 8.7Z" fill="#2f6fe8"/></svg><svg style="position:absolute;left:694.25px;top:130.20px" width="6.9" height="9.4" viewBox="0 0 6.5 8.7"><path d="M3.25 0L6.5 3.8H0Z M0 4.9H6.5L3.25 8.7Z" fill="#2f6fe8"/></svg><svg style="position:absolute;left:535.9px;top:151.3px" width="13" height="13" viewBox="0 0 13 13"><path d="M0.38 9.25 L0.41 9.16 L0.45 9.08 L0.49 9.00 L0.54 8.92 L0.59 8.85 L0.64 8.79 L0.70 8.72 L0.76 8.67 L0.83 8.61 L0.90 8.56 L0.97 8.52 L1.05 8.48 L1.13 8.44 L1.22 8.40 L1.31 8.37 L1.40 8.35 L1.50 8.33 L1.60 8.31 L1.71 8.29 L1.82 8.28 L1.93 8.27 L2.05 8.27 L2.17 8.27 L2.29 8.27 L2.41 8.28 L2.54 8.28 L2.67 8.29 L2.80 8.31 L2.94 8.32 L3.08 8.34 L3.21 8.36 L3.35 8.38 L3.50 8.40 L3.64 8.42 L3.79 8.45 L3.93 8.47 L4.08 8.50 L4.22 8.53 L4.37 8.55 L4.52 8.58 L4.52 8.58 L4.55 8.73 L4.57 8.88 L4.60 9.02 L4.63 9.17 L4.65 9.31 L4.68 9.46 L4.70 9.60 L4.72 9.75 L4.74 9.89 L4.76 10.02 L4.78 10.16 L4.79 10.30 L4.81 10.43 L4.82 10.56 L4.82 10.69 L4.83 10.81 L4.83 10.93 L4.83 11.05 L4.83 11.17 L4.82 11.28 L4.81 11.39 L4.79 11.50 L4.77 11.60 L4.75 11.70 L4.73 11.79 L4.70 11.88 L4.66 11.97 L4.62 12.05 L4.58 12.13 L4.54 12.20 L4.49 12.27 L4.43 12.34 L4.38 12.40 L4.31 12.46 L4.25 12.51 L4.18 12.56 L4.10 12.61 L4.02 12.65 L3.94 12.69 L3.85 12.72Z" fill="#4fc0dc"/><path d="M4.52 8.58 L4.76 8.63 L5.01 8.67 L5.25 8.71 L5.48 8.75 L5.72 8.79 L5.95 8.82 L6.17 8.85 L6.39 8.87 L6.61 8.88 L6.81 8.89 L7.01 8.89 L7.20 8.88 L7.37 8.86 L7.54 8.83 L7.70 8.79 L7.85 8.74 L7.99 8.68 L8.12 8.61 L8.23 8.53 L8.34 8.44 L8.43 8.33 L8.51 8.22 L8.58 8.09 L8.64 7.95 L8.69 7.80 L8.73 7.64 L8.76 7.47 L8.78 7.30 L8.79 7.11 L8.79 6.91 L8.78 6.71 L8.77 6.49 L8.75 6.27 L8.72 6.05 L8.69 5.82 L8.65 5.58 L8.61 5.35 L8.57 5.11 L8.53 4.86 L8.48 4.62 L8.48 4.62 L8.24 4.57 L7.99 4.53 L7.75 4.49 L7.52 4.45 L7.28 4.41 L7.05 4.38 L6.83 4.35 L6.61 4.33 L6.39 4.32 L6.19 4.31 L5.99 4.31 L5.80 4.32 L5.63 4.34 L5.46 4.37 L5.30 4.41 L5.15 4.46 L5.01 4.52 L4.88 4.59 L4.77 4.67 L4.66 4.76 L4.57 4.87 L4.49 4.98 L4.42 5.11 L4.36 5.25 L4.31 5.40 L4.27 5.56 L4.24 5.73 L4.22 5.90 L4.21 6.09 L4.21 6.29 L4.22 6.49 L4.23 6.71 L4.25 6.93 L4.28 7.15 L4.31 7.38 L4.35 7.62 L4.39 7.85 L4.43 8.09 L4.47 8.34 L4.52 8.58Z" fill="#55c4e0"/><path d="M6.95 8.89 L7.03 8.89 L7.10 8.89 L7.18 8.88 L7.25 8.87 L7.32 8.87 L7.39 8.86 L7.45 8.85 L7.52 8.84 L7.58 8.82 L7.65 8.81 L7.71 8.79 L7.77 8.77 L7.83 8.75 L7.88 8.73 L7.94 8.71 L7.99 8.68 L8.04 8.66 L8.09 8.63 L8.14 8.60 L8.19 8.57 L8.23 8.53 L8.27 8.50 L8.31 8.46 L8.35 8.42 L8.39 8.38 L8.43 8.34 L8.46 8.30 L8.49 8.25 L8.52 8.20 L8.55 8.16 L8.58 8.10 L8.60 8.05 L8.63 8.00 L8.65 7.94 L8.67 7.88 L8.69 7.83 L8.70 7.76 L8.72 7.70 L8.73 7.64 L8.75 7.57 L5.53 4.35 L5.46 4.37 L5.40 4.38 L5.34 4.40 L5.27 4.41 L5.22 4.43 L5.16 4.45 L5.10 4.47 L5.05 4.50 L5.00 4.52 L4.94 4.55 L4.90 4.58 L4.85 4.61 L4.80 4.64 L4.76 4.67 L4.72 4.71 L4.68 4.75 L4.64 4.79 L4.60 4.83 L4.57 4.87 L4.53 4.91 L4.50 4.96 L4.47 5.01 L4.44 5.06 L4.42 5.11 L4.39 5.16 L4.37 5.22 L4.35 5.27 L4.33 5.33 L4.31 5.39 L4.29 5.45 L4.28 5.52 L4.26 5.58 L4.25 5.65 L4.24 5.71 L4.23 5.78 L4.23 5.85 L4.22 5.92 L4.21 6.00 L4.21 6.07 L4.21 6.15Z" fill="#f6cd94"/><path d="M8.48 4.62 L8.45 4.47 L8.43 4.32 L8.40 4.18 L8.37 4.03 L8.35 3.89 L8.32 3.74 L8.30 3.60 L8.28 3.45 L8.26 3.31 L8.24 3.18 L8.22 3.04 L8.21 2.90 L8.19 2.77 L8.18 2.64 L8.18 2.51 L8.17 2.39 L8.17 2.27 L8.17 2.15 L8.17 2.03 L8.18 1.92 L8.19 1.81 L8.21 1.70 L8.23 1.60 L8.25 1.50 L8.27 1.41 L8.30 1.32 L8.34 1.23 L8.38 1.15 L8.42 1.07 L8.46 1.00 L8.51 0.93 L8.57 0.86 L8.62 0.80 L8.69 0.74 L8.75 0.69 L8.82 0.64 L8.90 0.59 L8.98 0.55 L9.06 0.51 L9.15 0.48 L12.62 3.95 L12.59 4.04 L12.55 4.12 L12.51 4.20 L12.46 4.28 L12.41 4.35 L12.36 4.41 L12.30 4.48 L12.24 4.53 L12.17 4.59 L12.10 4.64 L12.03 4.68 L11.95 4.72 L11.87 4.76 L11.78 4.80 L11.69 4.83 L11.60 4.85 L11.50 4.87 L11.40 4.89 L11.29 4.91 L11.18 4.92 L11.07 4.93 L10.95 4.93 L10.83 4.93 L10.71 4.93 L10.59 4.92 L10.46 4.92 L10.33 4.91 L10.20 4.89 L10.06 4.88 L9.92 4.86 L9.79 4.84 L9.65 4.82 L9.50 4.80 L9.36 4.78 L9.21 4.75 L9.07 4.73 L8.92 4.70 L8.78 4.67 L8.63 4.65 L8.48 4.62Z" fill="#efba98"/><path d="M0.38 9.25 L0.52 8.95 L0.72 8.71 L0.97 8.52 L1.27 8.39 L1.63 8.30 L2.03 8.27 L2.48 8.28 L2.96 8.32 L3.47 8.39 L4.00 8.48 L4.54 8.58 L5.07 8.68 L5.60 8.77 L6.11 8.84 L6.59 8.88 L7.03 8.89 L7.44 8.85 L7.79 8.77 L8.09 8.63 L8.34 8.44 L8.53 8.19 L8.67 7.89 L8.75 7.54 L8.79 7.13 L8.78 6.69 L8.74 6.21 L8.67 5.70 L8.58 5.17 L8.48 4.64 L8.38 4.10 L8.29 3.57 L8.22 3.06 L8.18 2.58 L8.17 2.13 L8.20 1.73 L8.29 1.37 L8.42 1.07 L8.61 0.82 L8.85 0.62 L9.15 0.48" fill="none" stroke="#7f97a0" stroke-width="1" stroke-linecap="round"/><path d="M3.85 12.72 L4.15 12.58 L4.39 12.38 L4.58 12.13 L4.71 11.83 L4.80 11.47 L4.83 11.07 L4.82 10.62 L4.78 10.14 L4.71 9.63 L4.62 9.10 L4.52 8.56 L4.42 8.03 L4.33 7.50 L4.26 6.99 L4.22 6.51 L4.21 6.07 L4.25 5.66 L4.33 5.31 L4.47 5.01 L4.66 4.76 L4.91 4.57 L5.21 4.43 L5.56 4.35 L5.97 4.31 L6.41 4.32 L6.89 4.36 L7.40 4.43 L7.93 4.52 L8.46 4.62 L9.00 4.72 L9.53 4.81 L10.04 4.88 L10.52 4.92 L10.97 4.93 L11.37 4.90 L11.73 4.81 L12.03 4.68 L12.28 4.49 L12.48 4.25 L12.62 3.95" fill="none" stroke="#8c9a96" stroke-width="1" stroke-linecap="round"/></svg><div class="pager" style="left:587.50px;top:288.80px;font-size:7.6px">1 - 6 of 6</div><svg style="position:absolute;left:632.70px;top:289.60px" width="7.70" height="8" viewBox="0 0 7.70 8"><path d="M4.50 .6L.9 4L4.50 7.4 M7.10 .6L3.50 4L7.10 7.4" fill="none" stroke="#3a3a3a" stroke-width="1.2"/></svg><svg style="position:absolute;left:653.80px;top:289.60px" width="5.00" height="8" viewBox="0 0 5.00 8"><path d="M4.20 .6L.9 4L4.20 7.4" fill="none" stroke="#3a3a3a" stroke-width="1.2"/></svg><svg style="position:absolute;left:669.30px;top:289.60px" width="5.10" height="8" viewBox="0 0 5.10 8"><path d="M.8 .6L4.20 4L.8 7.4" fill="none" stroke="#3a3a3a" stroke-width="1.2"/></svg><svg style="position:absolute;left:686.30px;top:289.60px" width="8.30" height="8" viewBox="0 0 8.30 8"><path d="M.6 .6L4.80 4L.6 7.4 M3.20 .6L7.40 4L3.20 7.4" fill="none" stroke="#3a3a3a" stroke-width="1.2"/></svg>
<div class="panel" style="left:4px;top:315.4px;width:460.6px;height:195.4px"></div><div class="ptitle" style="left:11.7px;top:324.8px">Genetic Screening</div><div style="position:absolute;left:373.7px;top:324.3px;width:81.6px;height:15.7px;border:1px solid #b5b5b5;border-radius:8px;background:#fff"></div><svg style="position:absolute;left:376.2px;top:327.8px" width="9" height="9.5" viewBox="0 0 9 9.5"><circle cx="3.6" cy="3.6" r="2.7" fill="none" stroke="#555" stroke-width="1.1"/><path d="M5.6 5.7L8.2 8.6" stroke="#555" stroke-width="1.4" stroke-linecap="round"/></svg><div class="t" style="left:387.5px;top:327.3px;font-size:7.6px;color:#a9a9a9">Search...</div><div class="g"><table style="left:4px;top:345.5px;width:460.6px"><colgroup><col style="width:397.2px"><col></colgroup><tr><th style="height:22.4px">Interaction</th><th style="height:22.4px">Type</th></tr><tr><td class="n"><u>NC_000005.9:112137080:G:A</u> (APC) - Familial multiple polyposis</td><td>Dx/Tx</td></tr><tr><td class="n"><u>NC_000019.9:11221406:C:G</u> (LDLR) - Familial hypercholesterolemia</td><td>Dx/Tx</td></tr><tr><td class="n"><u>NC_000011.9:47367763:T:C</u> (MYBPC3) - Familial cardiomyopathy</td><td>Dx/Tx</td></tr><tr><td class="n"><u>CYP2D6 *1/*1xN</u> - Codeine</td><td>Rx</td></tr><tr><td class="n"><u>SLCO1B1 *5/*5</u> - Simvastatin</td><td>Rx</td></tr></table></div><svg style="position:absolute;left:390.25px;top:352.50px" width="6.9" height="9.4" viewBox="0 0 6.5 8.7"><path d="M3.25 0L6.5 3.8H0Z M0 4.9H6.5L3.25 8.7Z" fill="#2f6fe8"/></svg><svg style="position:absolute;left:454.25px;top:352.50px" width="6.9" height="9.4" viewBox="0 0 6.5 8.7"><path d="M3.25 0L6.5 3.8H0Z M0 4.9H6.5L3.25 8.7Z" fill="#2f6fe8"/></svg><div class="pager" style="left:340.60px;top:489.70px;font-size:7.6px">1 - 5 of 12</div><svg style="position:absolute;left:389.20px;top:489.90px" width="7.80" height="8" viewBox="0 0 7.80 8"><path d="M4.60 .6L.9 4L4.60 7.4 M7.20 .6L3.50 4L7.20 7.4" fill="none" stroke="#3a3a3a" stroke-width="1.2"/></svg><svg style="position:absolute;left:410.40px;top:489.90px" width="4.90" height="8" viewBox="0 0 4.90 8"><path d="M4.10 .6L.9 4L4.10 7.4" fill="none" stroke="#3a3a3a" stroke-width="1.2"/></svg><svg style="position:absolute;left:425.60px;top:489.90px" width="5.00" height="8" viewBox="0 0 5.00 8"><path d="M.8 .6L4.10 4L.8 7.4" fill="none" stroke="#3a3a3a" stroke-width="1.2"/></svg><svg style="position:absolute;left:443.00px;top:489.90px" width="8.10" height="8" viewBox="0 0 8.10 8"><path d="M.6 .6L4.60 4L.6 7.4 M3.20 .6L7.20 4L3.20 7.4" fill="none" stroke="#3a3a3a" stroke-width="1.2"/></svg>
<div class="panel" style="left:478.3px;top:315.4px;width:226.6px;height:169.6px"></div><div class="ptitle" style="left:489.3px;top:326.2px">Allergy / Intolerance List</div><div class="a"><table style="left:478.3px;top:346.4px;width:226.6px"><colgroup><col style="width:144.4px"><col></colgroup><tr><th style="height:22.4px">Substance</th><th style="height:22.4px">Status</th></tr><tr><td class="n">penicillin</td><td>Confirmed</td></tr><tr><td class="n">codeine</td><td>Unconfirmed</td></tr><tr><td class="n"></td><td></td></tr><tr><td class="n"></td><td></td></tr></table></div><svg style="position:absolute;left:608.55px;top:353.20px" width="6.9" height="9.4" viewBox="0 0 6.5 8.7"><path d="M3.25 0L6.5 3.8H0Z M0 4.9H6.5L3.25 8.7Z" fill="#2f6fe8"/></svg><svg style="position:absolute;left:694.55px;top:353.20px" width="6.9" height="9.4" viewBox="0 0 6.5 8.7"><path d="M3.25 0L6.5 3.8H0Z M0 4.9H6.5L3.25 8.7Z" fill="#2f6fe8"/></svg><svg style="position:absolute;left:604.3px;top:395px" width="13" height="13" viewBox="0 0 13 13"><path d="M0.38 9.25 L0.41 9.16 L0.45 9.08 L0.49 9.00 L0.54 8.92 L0.59 8.85 L0.64 8.79 L0.70 8.72 L0.76 8.67 L0.83 8.61 L0.90 8.56 L0.97 8.52 L1.05 8.48 L1.13 8.44 L1.22 8.40 L1.31 8.37 L1.40 8.35 L1.50 8.33 L1.60 8.31 L1.71 8.29 L1.82 8.28 L1.93 8.27 L2.05 8.27 L2.17 8.27 L2.29 8.27 L2.41 8.28 L2.54 8.28 L2.67 8.29 L2.80 8.31 L2.94 8.32 L3.08 8.34 L3.21 8.36 L3.35 8.38 L3.50 8.40 L3.64 8.42 L3.79 8.45 L3.93 8.47 L4.08 8.50 L4.22 8.53 L4.37 8.55 L4.52 8.58 L4.52 8.58 L4.55 8.73 L4.57 8.88 L4.60 9.02 L4.63 9.17 L4.65 9.31 L4.68 9.46 L4.70 9.60 L4.72 9.75 L4.74 9.89 L4.76 10.02 L4.78 10.16 L4.79 10.30 L4.81 10.43 L4.82 10.56 L4.82 10.69 L4.83 10.81 L4.83 10.93 L4.83 11.05 L4.83 11.17 L4.82 11.28 L4.81 11.39 L4.79 11.50 L4.77 11.60 L4.75 11.70 L4.73 11.79 L4.70 11.88 L4.66 11.97 L4.62 12.05 L4.58 12.13 L4.54 12.20 L4.49 12.27 L4.43 12.34 L4.38 12.40 L4.31 12.46 L4.25 12.51 L4.18 12.56 L4.10 12.61 L4.02 12.65 L3.94 12.69 L3.85 12.72Z" fill="#4fc0dc"/><path d="M4.52 8.58 L4.76 8.63 L5.01 8.67 L5.25 8.71 L5.48 8.75 L5.72 8.79 L5.95 8.82 L6.17 8.85 L6.39 8.87 L6.61 8.88 L6.81 8.89 L7.01 8.89 L7.20 8.88 L7.37 8.86 L7.54 8.83 L7.70 8.79 L7.85 8.74 L7.99 8.68 L8.12 8.61 L8.23 8.53 L8.34 8.44 L8.43 8.33 L8.51 8.22 L8.58 8.09 L8.64 7.95 L8.69 7.80 L8.73 7.64 L8.76 7.47 L8.78 7.30 L8.79 7.11 L8.79 6.91 L8.78 6.71 L8.77 6.49 L8.75 6.27 L8.72 6.05 L8.69 5.82 L8.65 5.58 L8.61 5.35 L8.57 5.11 L8.53 4.86 L8.48 4.62 L8.48 4.62 L8.24 4.57 L7.99 4.53 L7.75 4.49 L7.52 4.45 L7.28 4.41 L7.05 4.38 L6.83 4.35 L6.61 4.33 L6.39 4.32 L6.19 4.31 L5.99 4.31 L5.80 4.32 L5.63 4.34 L5.46 4.37 L5.30 4.41 L5.15 4.46 L5.01 4.52 L4.88 4.59 L4.77 4.67 L4.66 4.76 L4.57 4.87 L4.49 4.98 L4.42 5.11 L4.36 5.25 L4.31 5.40 L4.27 5.56 L4.24 5.73 L4.22 5.90 L4.21 6.09 L4.21 6.29 L4.22 6.49 L4.23 6.71 L4.25 6.93 L4.28 7.15 L4.31 7.38 L4.35 7.62 L4.39 7.85 L4.43 8.09 L4.47 8.34 L4.52 8.58Z" fill="#55c4e0"/><path d="M6.95 8.89 L7.03 8.89 L7.10 8.89 L7.18 8.88 L7.25 8.87 L7.32 8.87 L7.39 8.86 L7.45 8.85 L7.52 8.84 L7.58 8.82 L7.65 8.81 L7.71 8.79 L7.77 8.77 L7.83 8.75 L7.88 8.73 L7.94 8.71 L7.99 8.68 L8.04 8.66 L8.09 8.63 L8.14 8.60 L8.19 8.57 L8.23 8.53 L8.27 8.50 L8.31 8.46 L8.35 8.42 L8.39 8.38 L8.43 8.34 L8.46 8.30 L8.49 8.25 L8.52 8.20 L8.55 8.16 L8.58 8.10 L8.60 8.05 L8.63 8.00 L8.65 7.94 L8.67 7.88 L8.69 7.83 L8.70 7.76 L8.72 7.70 L8.73 7.64 L8.75 7.57 L5.53 4.35 L5.46 4.37 L5.40 4.38 L5.34 4.40 L5.27 4.41 L5.22 4.43 L5.16 4.45 L5.10 4.47 L5.05 4.50 L5.00 4.52 L4.94 4.55 L4.90 4.58 L4.85 4.61 L4.80 4.64 L4.76 4.67 L4.72 4.71 L4.68 4.75 L4.64 4.79 L4.60 4.83 L4.57 4.87 L4.53 4.91 L4.50 4.96 L4.47 5.01 L4.44 5.06 L4.42 5.11 L4.39 5.16 L4.37 5.22 L4.35 5.27 L4.33 5.33 L4.31 5.39 L4.29 5.45 L4.28 5.52 L4.26 5.58 L4.25 5.65 L4.24 5.71 L4.23 5.78 L4.23 5.85 L4.22 5.92 L4.21 6.00 L4.21 6.07 L4.21 6.15Z" fill="#f6cd94"/><path d="M8.48 4.62 L8.45 4.47 L8.43 4.32 L8.40 4.18 L8.37 4.03 L8.35 3.89 L8.32 3.74 L8.30 3.60 L8.28 3.45 L8.26 3.31 L8.24 3.18 L8.22 3.04 L8.21 2.90 L8.19 2.77 L8.18 2.64 L8.18 2.51 L8.17 2.39 L8.17 2.27 L8.17 2.15 L8.17 2.03 L8.18 1.92 L8.19 1.81 L8.21 1.70 L8.23 1.60 L8.25 1.50 L8.27 1.41 L8.30 1.32 L8.34 1.23 L8.38 1.15 L8.42 1.07 L8.46 1.00 L8.51 0.93 L8.57 0.86 L8.62 0.80 L8.69 0.74 L8.75 0.69 L8.82 0.64 L8.90 0.59 L8.98 0.55 L9.06 0.51 L9.15 0.48 L12.62 3.95 L12.59 4.04 L12.55 4.12 L12.51 4.20 L12.46 4.28 L12.41 4.35 L12.36 4.41 L12.30 4.48 L12.24 4.53 L12.17 4.59 L12.10 4.64 L12.03 4.68 L11.95 4.72 L11.87 4.76 L11.78 4.80 L11.69 4.83 L11.60 4.85 L11.50 4.87 L11.40 4.89 L11.29 4.91 L11.18 4.92 L11.07 4.93 L10.95 4.93 L10.83 4.93 L10.71 4.93 L10.59 4.92 L10.46 4.92 L10.33 4.91 L10.20 4.89 L10.06 4.88 L9.92 4.86 L9.79 4.84 L9.65 4.82 L9.50 4.80 L9.36 4.78 L9.21 4.75 L9.07 4.73 L8.92 4.70 L8.78 4.67 L8.63 4.65 L8.48 4.62Z" fill="#efba98"/><path d="M0.38 9.25 L0.52 8.95 L0.72 8.71 L0.97 8.52 L1.27 8.39 L1.63 8.30 L2.03 8.27 L2.48 8.28 L2.96 8.32 L3.47 8.39 L4.00 8.48 L4.54 8.58 L5.07 8.68 L5.60 8.77 L6.11 8.84 L6.59 8.88 L7.03 8.89 L7.44 8.85 L7.79 8.77 L8.09 8.63 L8.34 8.44 L8.53 8.19 L8.67 7.89 L8.75 7.54 L8.79 7.13 L8.78 6.69 L8.74 6.21 L8.67 5.70 L8.58 5.17 L8.48 4.64 L8.38 4.10 L8.29 3.57 L8.22 3.06 L8.18 2.58 L8.17 2.13 L8.20 1.73 L8.29 1.37 L8.42 1.07 L8.61 0.82 L8.85 0.62 L9.15 0.48" fill="none" stroke="#7f97a0" stroke-width="1" stroke-linecap="round"/><path d="M3.85 12.72 L4.15 12.58 L4.39 12.38 L4.58 12.13 L4.71 11.83 L4.80 11.47 L4.83 11.07 L4.82 10.62 L4.78 10.14 L4.71 9.63 L4.62 9.10 L4.52 8.56 L4.42 8.03 L4.33 7.50 L4.26 6.99 L4.22 6.51 L4.21 6.07 L4.25 5.66 L4.33 5.31 L4.47 5.01 L4.66 4.76 L4.91 4.57 L5.21 4.43 L5.56 4.35 L5.97 4.31 L6.41 4.32 L6.89 4.36 L7.40 4.43 L7.93 4.52 L8.46 4.62 L9.00 4.72 L9.53 4.81 L10.04 4.88 L10.52 4.92 L10.97 4.93 L11.37 4.90 L11.73 4.81 L12.03 4.68 L12.28 4.49 L12.48 4.25 L12.62 3.95" fill="none" stroke="#8c9a96" stroke-width="1" stroke-linecap="round"/></svg><div class="pager" style="left:593.70px;top:468.70px;font-size:7.3px">1 - 2 of 2</div><svg style="position:absolute;left:638.70px;top:469.50px" width="7.60" height="8" viewBox="0 0 7.60 8"><path d="M4.40 .6L.9 4L4.40 7.4 M7.00 .6L3.50 4L7.00 7.4" fill="none" stroke="#3a3a3a" stroke-width="1.2"/></svg><svg style="position:absolute;left:661.00px;top:469.50px" width="5.00" height="8" viewBox="0 0 5.00 8"><path d="M4.20 .6L.9 4L4.20 7.4" fill="none" stroke="#3a3a3a" stroke-width="1.2"/></svg><svg style="position:absolute;left:675.30px;top:469.50px" width="5.00" height="8" viewBox="0 0 5.00 8"><path d="M.8 .6L4.10 4L.8 7.4" fill="none" stroke="#3a3a3a" stroke-width="1.2"/></svg><svg style="position:absolute;left:692.70px;top:469.50px" width="7.60" height="8" viewBox="0 0 7.60 8"><path d="M.6 .6L4.10 4L.6 7.4 M3.20 .6L6.70 4L3.20 7.4" fill="none" stroke="#3a3a3a" stroke-width="1.2"/></svg>
</body>
</html>
